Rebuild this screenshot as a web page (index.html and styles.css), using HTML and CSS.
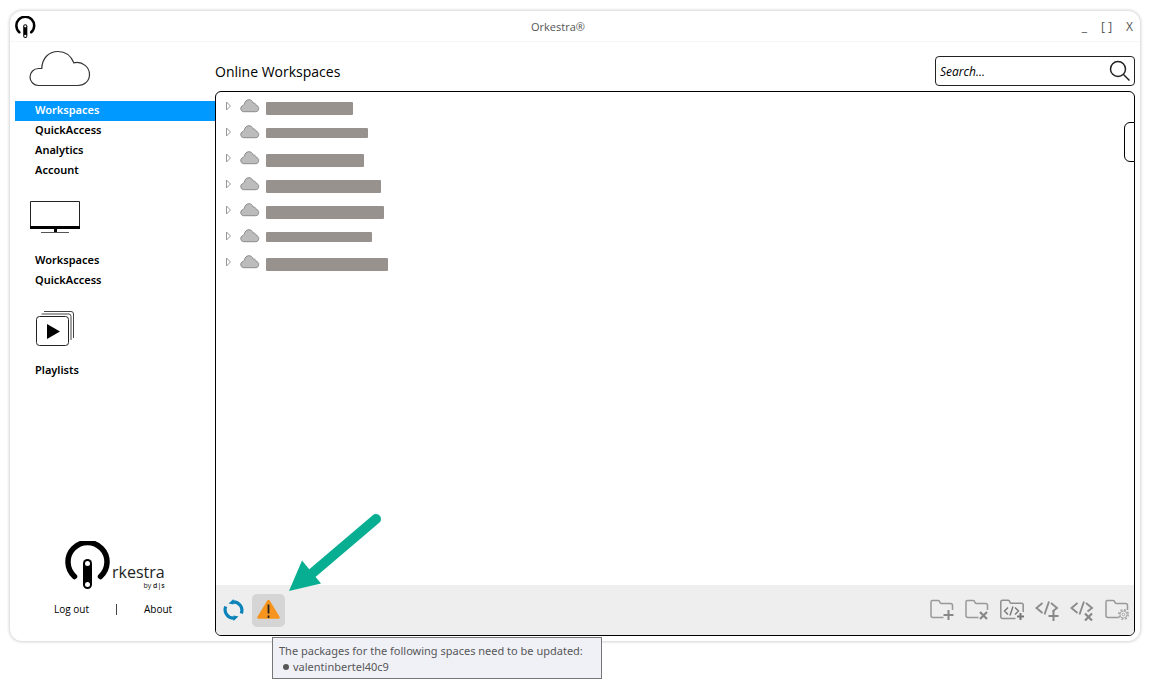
FILE: index.html
```html
<!DOCTYPE html>
<html lang="en">
<head>
<meta charset="utf-8">
<title>Orkestra</title>
<link rel="stylesheet" href="styles.css">
</head>
<body>
<svg class="defs" aria-hidden="true">
  <symbol id="mark" viewBox="0 0 46 50">
    <path d="M9.500 35.500A19.500 19.500 0 1 1 35.500 35.500" fill="none" stroke="#000" stroke-width="5.500" stroke-linecap="round"/>
    <rect x="18" y="18" width="9" height="30" rx="4.500"/>
    <circle cx="22.500" cy="22.500" r="2.500" fill="#fff"/>
    <circle cx="22.500" cy="43.500" r="2.500" fill="#fff"/>
  </symbol>
  <symbol id="expander" viewBox="0 0 6 10">
    <path d="M1.500 1v8L5.500 5z" fill="#fff" stroke="#999"/>
  </symbol>
  <symbol id="cloud" viewBox="0 0 20 14">
    <path d="M3.500 12.700a3.200 3.200 0 0 1-.6-6.200C3.400 5.800 3.800 5.500 4.400 5.300 4.700 2.500 6.500 .7 8.900 .7c2 0 3.500 1.100 4 3.200 2 0 3 1 3.300 2.500 1.600.3 2.500 1.500 2.500 3 0 2-1.300 3.300-3 3.300z" fill="#bcbcbc" stroke="#8b8b8b"/>
  </symbol>
  <symbol id="folder" viewBox="0 0 24 22">
    <path d="M13.500 18.500H3Q1 18.500 1 16.500V3Q1 1.500 2.500 1.500H8Q9.500 1.500 9.800 3T11.300 4.500H20.500Q22.500 4.500 22.500 6.500V11" fill="none" stroke="#999" stroke-width="1.500"/>
  </symbol>
</svg>
<div class="window">
  <header class="titlebar">
    <svg class="app-icon" aria-hidden="true"><use href="#mark"/></svg>
    <h1 class="app-title">Orkestra®</h1>
    <div class="window-controls">
      <button type="button" aria-label="Minimize">_</button>
      <button type="button" aria-label="Maximize">[ ]</button>
      <button type="button" aria-label="Close">X</button>
    </div>
  </header>
  <div class="body">
    <aside class="sidebar">
      <svg class="icon-online" viewBox="0 0 62 38" aria-hidden="true"><path d="M9.500 35.500a8.500 8.500 0 0 1 0-17h3.300C13 8.500 19.500 1.500 29 1.500c7.500 0 13 4.500 15.800 11.300C54 11 60.500 17.500 60.500 24.500c0 6.500-5 11-11.500 11z" fill="none" stroke="#333" stroke-width="1.200"/></svg>
      <nav class="nav" aria-label="Online">
        <a class="current" href="#workspaces">Workspaces</a>
        <a href="#quick">QuickAccess</a>
        <a href="#analytics">Analytics</a>
        <a href="#account">Account</a>
      </nav>
      <svg class="icon-local" viewBox="0 0 50 34" aria-hidden="true"><path d="M.5.500h49v27H.5z" fill="#fff" stroke="#222"/><path d="M0 25h50v3H0zM24 28h3v3h-3z"/><path d="M11 31.500h28" stroke="#555"/></svg>
      <nav class="nav" aria-label="Local">
        <a href="#local-workspaces">Workspaces</a>
        <a href="#local-quick">QuickAccess</a>
      </nav>
      <svg class="icon-playlists" viewBox="0 0 40 36" aria-hidden="true"><path d="M8 .5h27q2.500 0 2.500 2.500v24M5.500 3h27.500q2 0 2 2.500V29" fill="none" stroke="#444"/><rect x=".5" y="5.500" width="32" height="29" rx="3" fill="#fff" stroke="#222"/><path d="M11 13v15l13-7.500z"/></svg>
      <nav class="nav" aria-label="Playlists">
        <a href="#playlists">Playlists</a>
      </nav>
      <footer class="sidebar-footer">
        <div class="brand">
          <svg class="brand-mark" aria-hidden="true"><use href="#mark"/></svg>
          <div class="brand-text"><span class="brand-name">rkestra</span><span class="brand-by">by <b>d|s</b></span></div>
        </div>
        <div class="links"><a href="#logout">Log out</a><span class="divider"></span><a href="#about">About</a></div>
      </footer>
    </aside>
    <main class="content">
      <div class="content-header">
        <h2>Online Workspaces</h2>
        <form class="search">
          <input type="text" aria-label="Search" placeholder="Search...">
          <button type="button" aria-label="Start search"><svg viewBox="0 0 22 22"><circle cx="9" cy="9" r="7.500"/><path d="M14.500 14.500l6 6"/></svg></button>
        </form>
      </div>
      <section class="panel">
        <ul class="tree">
          <li><svg class="expander"><use href="#expander"/></svg><svg class="cloud"><use href="#cloud"/></svg><span class="name tall" style="width:87px"></span></li>
          <li><svg class="expander"><use href="#expander"/></svg><svg class="cloud"><use href="#cloud"/></svg><span class="name" style="width:102px"></span></li>
          <li><svg class="expander"><use href="#expander"/></svg><svg class="cloud"><use href="#cloud"/></svg><span class="name tall" style="width:98px"></span></li>
          <li><svg class="expander"><use href="#expander"/></svg><svg class="cloud"><use href="#cloud"/></svg><span class="name tall" style="width:115px"></span></li>
          <li><svg class="expander"><use href="#expander"/></svg><svg class="cloud"><use href="#cloud"/></svg><span class="name tall" style="width:118px"></span></li>
          <li><svg class="expander"><use href="#expander"/></svg><svg class="cloud"><use href="#cloud"/></svg><span class="name" style="width:106px"></span></li>
          <li><svg class="expander"><use href="#expander"/></svg><svg class="cloud"><use href="#cloud"/></svg><span class="name tall" style="width:122px"></span></li>
        </ul>
        <button type="button" class="drawer" aria-label="Open details"></button>
        <div class="toolbar">
          <button type="button" class="tool refresh" aria-label="Refresh"><svg viewBox="0 0 22 22"><g fill="none" stroke="#0c83b8" stroke-width="3.200"><path d="M10 2.800A8.600 8.600 0 0 1 18.300 14.500"/><path d="M11 19.200A8.600 8.600 0 0 1 2.700 7.500"/></g><path d="M10.500 0v5.500l-5-1zM10.500 22v-5.500l5 1z" fill="#0c83b8"/></svg></button>
          <div class="alert">
            <button type="button" class="tool warning" aria-label="Package updates" aria-describedby="tip"><svg viewBox="0 0 23 23"><path d="M11.500 2L21.500 18.500h-20z" fill="#f7941e" stroke="#f7941e" stroke-width="2.500" stroke-linejoin="round"/><path d="M11.500 5.500v9M11.500 16.500v2.500" stroke="#222" stroke-width="1.800"/></svg></button>
            <svg class="pointer" viewBox="0 0 94 79" aria-hidden="true"><path d="M87 6L20 63" stroke="#08ae91" stroke-width="10" stroke-linecap="round"/><path d="M0 78L13 47.500 32 70.500z" fill="#08ae91"/></svg>
            <div class="tooltip" id="tip" role="tooltip"><p>The packages for the following spaces need to be updated:</p><ul><li>valentinbertel40c9</li></ul></div>
          </div>
          <div class="actions">
            <button type="button" class="tool" aria-label="Add folder"><svg viewBox="0 0 24 22"><use href="#folder"/><path d="M18.500 11v10M13.500 16h10" stroke="#888" stroke-width="2"/></svg></button>
            <button type="button" class="tool" aria-label="Delete folder"><svg viewBox="0 0 24 22"><use href="#folder"/><path d="M15 13l7 7M22 13l-7 7" stroke="#888" stroke-width="2.200"/></svg></button>
            <button type="button" class="tool" aria-label="Add project"><svg viewBox="0 0 24 22"><path d="M15.500 19.500H2.500Q.8 19.500.8 17.800V3Q.8 1.200 2.500 1.200H8Q9.500 1.200 9.800 2.800T11.300 4.200H21.500Q23.200 4.200 23.200 6V13" fill="none" stroke="#909090" stroke-width="1.500"/><path d="M8 8.500L4.500 12 8 15.500M15 8.500l3.500 3.500-3.500 3.500M13 7.500l-3 9" fill="none" stroke="#777" stroke-width="1.400"/><path d="M20.500 14v7M17 17.500h7" stroke="#777" stroke-width="2"/></svg></button>
            <button type="button" class="tool" aria-label="Add script"><svg viewBox="0 0 24 22"><path d="M7.500 4L1.500 9l6 5M16 4l6 5-4.500 3.500M14 2.500L9.500 15.500" fill="none" stroke="#8c8c8c" stroke-width="1.900"/><path d="M18.500 12v10M13.500 17h10" stroke="#888" stroke-width="2"/></svg></button>
            <button type="button" class="tool" aria-label="Delete script"><svg viewBox="0 0 24 22"><path d="M7.500 4L1.500 9l6 5M16 4l6 5-4.500 3.500M14 2.500L9.500 15.500" fill="none" stroke="#8c8c8c" stroke-width="1.900"/><path d="M15 14.500l7 7M22 14.500l-7 7" stroke="#888" stroke-width="2.200"/></svg></button>
            <button type="button" class="tool" aria-label="Folder settings"><svg viewBox="0 0 24 22"><use href="#folder"/><circle cx="18.500" cy="15.500" r="4.700" fill="#eee" stroke="#aaa" stroke-width="1.800" stroke-dasharray="2 1.700"/><circle cx="18.500" cy="15.500" r="3.500" fill="none" stroke="#aaa"/><circle cx="18.500" cy="15.500" r="1.300" fill="none" stroke="#aaa"/></svg></button>
          </div>
        </div>
      </section>
    </main>
  </div>
</div>
</body>
</html>
```
FILE: styles.css
```css
* { box-sizing: border-box; }
body {
  display: flex;
  min-height: 100vh;
  margin: 0;
  padding: 11px 14px 46px 10px;
  background: #fff;
  color: #000;
  font: 12px/20px "Open Sans", "Noto Sans", sans-serif;
}
h1, h2, p, ul { margin: 0; padding: 0; font: inherit; }
ul { list-style: none; }
a { color: inherit; text-decoration: none; }
svg { display: block; flex: none; }
button { margin: 0; padding: 0; border: 0; background: none; color: inherit; font: inherit; }
.defs { position: absolute; width: 0; height: 0; }

.window {
  display: flex;
  flex: 1;
  flex-direction: column;
  min-width: 0;
  border-radius: 12px;
  background: #fff;
  box-shadow: 0 0 3px 1px #d4d4d4;
}
.titlebar {
  display: grid;
  grid-template-columns: 1fr auto 1fr;
  align-items: center;
  height: 31px;
  padding: 2px 7px 0 5px;
  border-bottom: 1px solid #f6f6f6;
  color: #555;
}
.app-icon { width: 21px; height: 23px; }
.app-title { margin-right: 32px; font-size: 11px; }
.window-controls { display: flex; justify-content: flex-end; gap: 14px; }

.body { display: flex; flex: 1; padding: 0 5px 5px 0; }
.sidebar { display: flex; flex: 0 0 205px; flex-direction: column; padding: 8px 0 18px 5px; }
.nav { display: flex; flex-direction: column; font: 600 11px/18px "Noto Sans", "Open Sans", sans-serif; }
.nav a { height: 20px; padding: 0 20px; }
.nav .current { background: #0099ff; color: #fff; }
.icon-online { width: 62px; height: 38px; margin: 0 0 13px 14px; }
.icon-local { width: 50px; height: 34px; margin: 20px 0 16px 15px; }
.icon-playlists { width: 40px; height: 36px; margin: 20px 0 14px 21px; }
.sidebar-footer { margin-top: auto; }
.brand { display: flex; align-items: flex-end; padding-left: 50px; }
.brand-mark { width: 46px; height: 50px; }
.brand-text { display: flex; flex-direction: column; align-items: flex-end; padding: 0 0 1px 1px; color: #222; }
.brand-name { font-size: 16px; line-height: 20px; }
.brand-by { font-size: 7px; line-height: 8px; }
.brand-by b { font-weight: 600; }
.links { display: flex; align-items: center; gap: 27px; padding: 9px 0 0 39px; font-size: 10px; line-height: 18px; }
.divider { width: 1px; height: 11px; background: #444; }

.content { display: flex; flex: 1; flex-direction: column; min-width: 0; }
.content-header { display: flex; justify-content: space-between; align-items: center; padding: 14px 0 5px; }
h2 { padding-top: 2px; font-size: 14px; }
.search {
  display: flex;
  align-items: center;
  width: 200px;
  height: 30px;
  padding: 0 3px 0 4px;
  border: 1px solid #222;
  border-radius: 4px;
}
.search input { flex: 1; min-width: 0; padding: 2px 0 0; border: 0; outline: 0; background: none; font: italic 12px/20px "Open Sans", "Noto Sans", sans-serif; }
.search input::placeholder { color: #000; opacity: 1; }
.search svg { width: 22px; height: 22px; fill: none; stroke: #222; stroke-width: 1.500; }

.panel { position: relative; display: flex; flex: 1; flex-direction: column; border: 1px solid #000; border-radius: 6px; }
.tree { flex: 1; padding: 1px 9px; }
.tree li { display: flex; align-items: flex-start; height: 26px; }
.expander { width: 6px; height: 10px; margin: 8px 9px 0 0; }
.cloud { width: 20px; height: 14px; margin: 6px 6px 0 0; }
.name { height: 10px; margin-top: 9px; border-radius: 1px; background: #98928f; }
.name.tall { height: 13px; }
.drawer {
  position: absolute;
  top: 30px;
  right: -1px;
  width: 11px;
  height: 40px;
  border: 1px solid #000;
  border-radius: 6px 0 0 6px;
  background: #fff;
}
.toolbar { display: flex; align-items: center; height: 50px; padding: 0 5px 0 7px; border-radius: 0 0 5px 5px; background: #eee; }
.tool { display: block; }
.tool svg { width: 24px; height: 22px; }
.refresh { margin-right: 7px; }
.refresh svg { width: 22px; }
.alert { position: relative; }
.warning { padding: 5px; border-radius: 5px; background: #d5d5d5; }
.warning svg { width: 23px; height: 23px; }
.pointer { position: absolute; bottom: 35px; left: 37px; width: 94px; height: 79px; }
.tooltip {
  position: absolute;
  top: 43px;
  left: 20px;
  padding: 5px 18px 3px 6px;
  border: 1px solid #767676;
  background: #f0f1f7;
  color: #575757;
  font: 11px/16px "Noto Sans", "Open Sans", sans-serif;
  white-space: nowrap;
}
.tooltip li { display: flex; align-items: center; gap: 4px; padding-left: 4px; }
.tooltip li::before { width: 6px; height: 6px; border-radius: 50%; background: #575757; content: ""; }
.actions { display: flex; gap: 11px; margin-left: auto; }
```
